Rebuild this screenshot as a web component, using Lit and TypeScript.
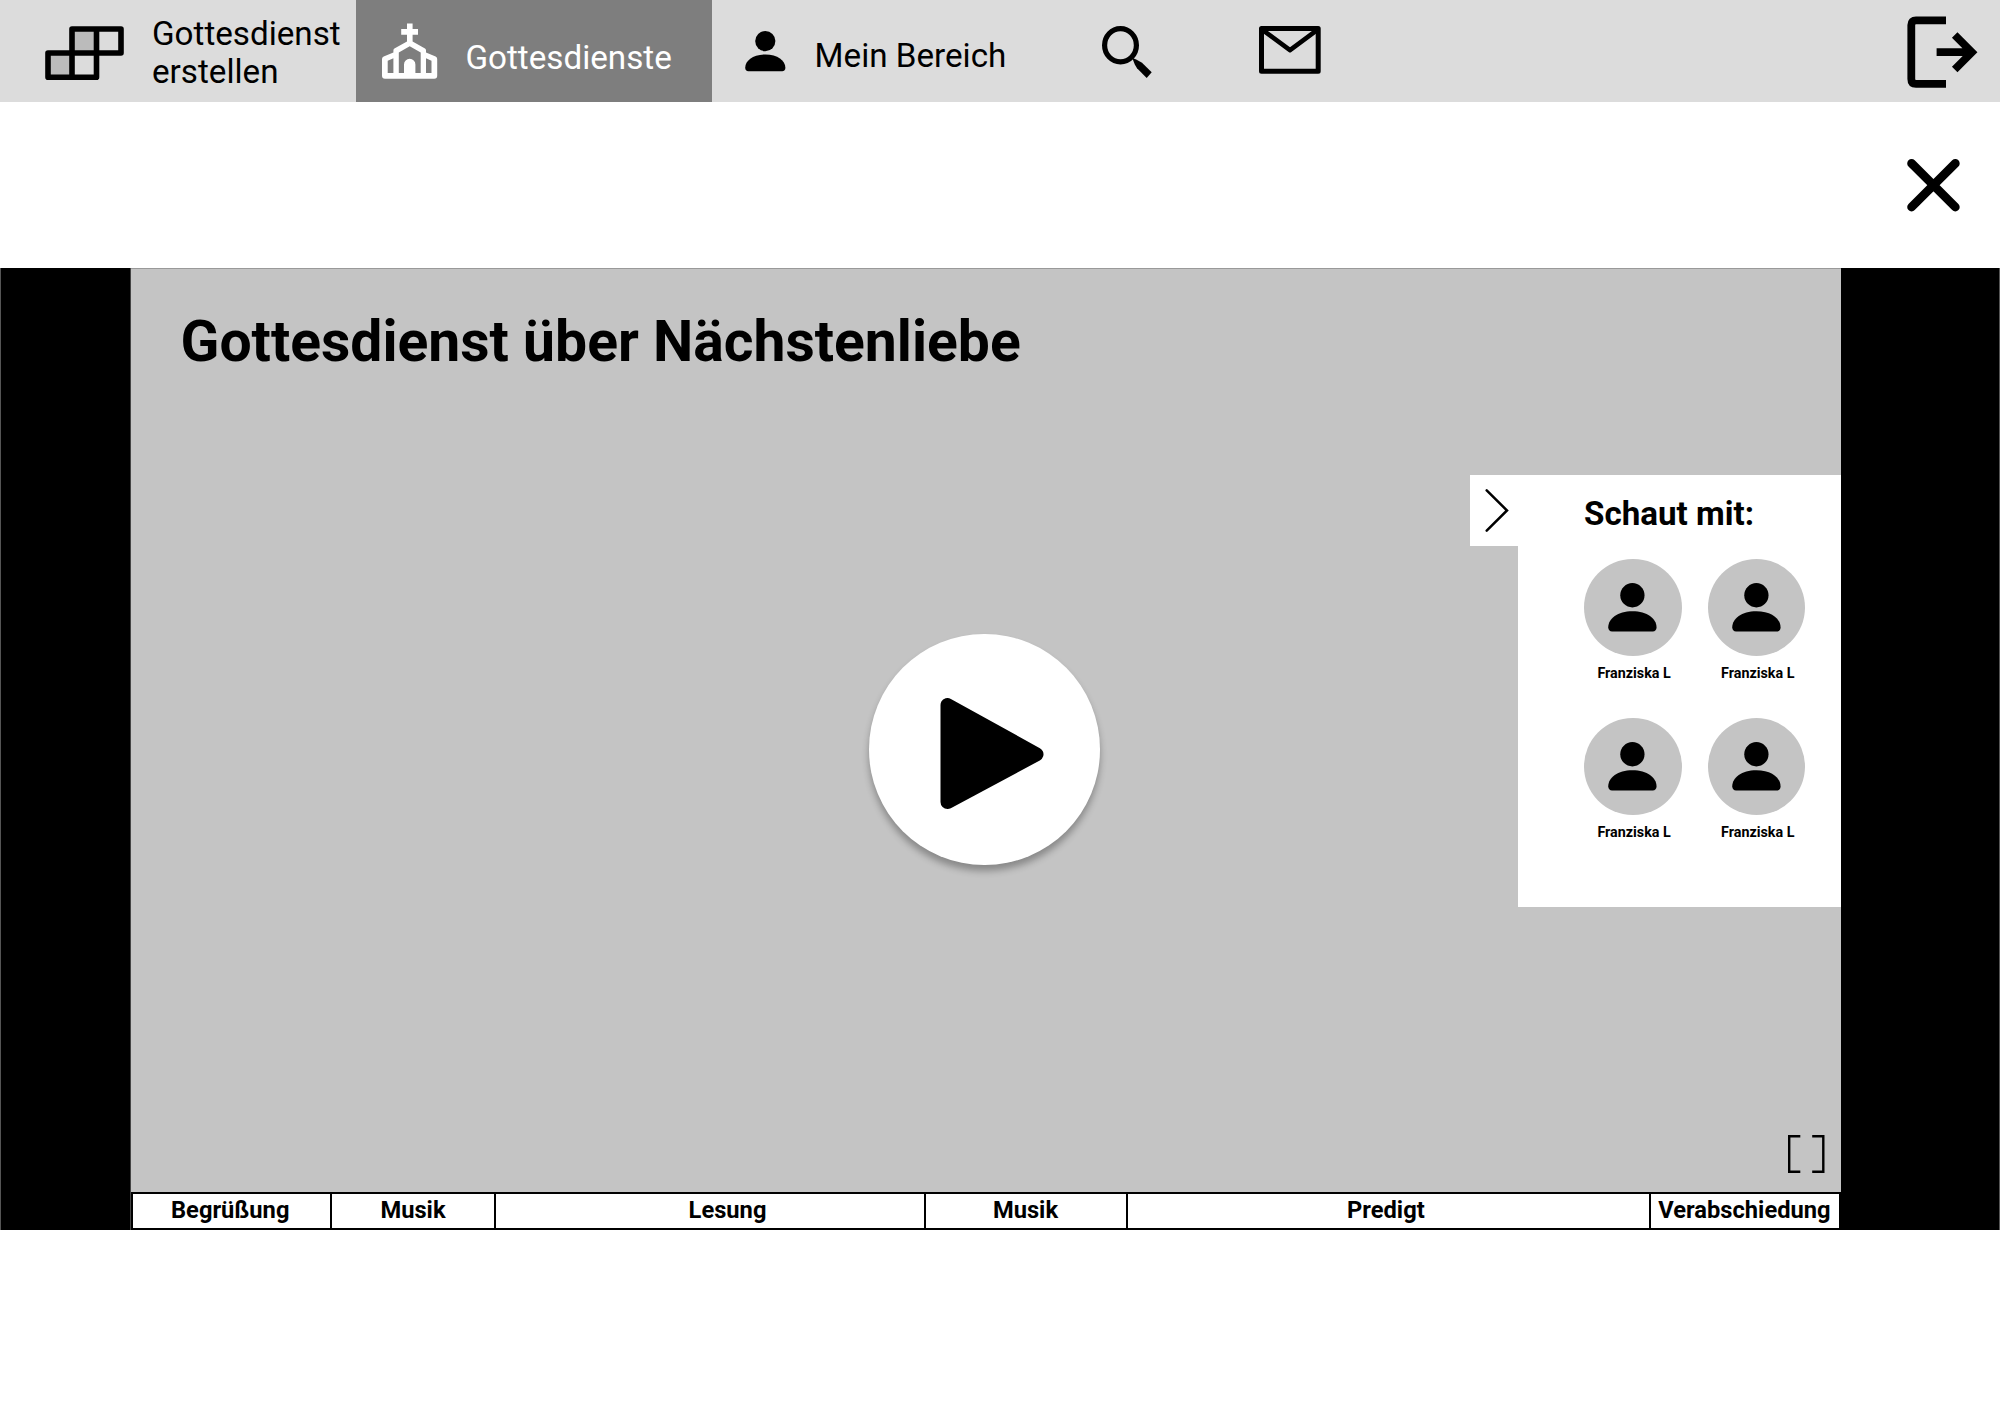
import { LitElement, html, css, svg } from "lit";
import { customElement } from "lit/decorators.js";

const person = svg`<circle cx="20.3" cy="10.1" r="10.1"></circle>
  <path d="M0.2 36.8C0.2 29.5 8 23.4 20.3 23.4S40.4 29.5 40.4 36.8C40.4 39 39.2 40.3 37.2 40.3H3.4C1.4 40.3 0.2 39 0.2 36.8Z"></path>`;

// Widths follow the length of each part; shift moves the label off centre.
const segments = [
  { label: "Begrüßung", width: 199, shift: -1.3 },
  { label: "Musik", width: 164, shift: 0 },
  { label: "Lesung", width: 430, shift: 17.5 },
  { label: "Musik", width: 202, shift: -0.5 },
  { label: "Predigt", width: 522.5, shift: -2.4 },
  { label: "Verabschiedung", width: 188.5, shift: -0.3 },
];
const viewers = ["Franziska L", "Franziska L", "Franziska L", "Franziska L"];

@customElement("app-root")
export class AppRoot extends LitElement {
  static styles = css`
    :host { display: block; height: 1413px; overflow: hidden; background: #fff; color: #000; font-family: Roboto, "Liberation Sans", sans-serif; }
    svg { display: block; flex: none; overflow: visible; }
    .bar { display: flex; height: 102px; background: #dcdcdc; }
    .item { display: flex; box-sizing: border-box; font-size: 33.2px; line-height: 37.5px; white-space: nowrap; }
    .create { width: 356.3px; padding: 15px 0 0 45px; }
    .create svg { margin: 11px 27.5px 0 0; }
    .active { width: 356.2px; background: #7e7e7e; color: #fff; padding: 23px 0 0 25.7px; }
    .active span { margin: 15.5px 0 0 28px; }
    .mine { width: 389.5px; padding: 31px 0 0 33px; }
    .mine span { margin: 5.5px 0 0 28.5px; }
    .search { width: 157px; padding-top: 26px; }
    .mail { padding-top: 26px; }
    .logout { margin-left: auto; padding: 16px 23.3px 0 0; }
    .sub { display: flex; justify-content: flex-end; height: 166px; box-sizing: border-box; padding: 58px 40.5px 0 0; }
    .player { display: flex; box-sizing: border-box; height: 962px; background: #000; padding-left: 129px; border: solid #555; border-width: 0 1px; }
    .stage { position: relative; display: flex; flex-direction: column; width: 1710px; background: #c4c4c4; border-left: 1px solid #444; }
    .view { flex: 1; box-sizing: border-box; border-top: 1px solid #999; padding: 39px 0 0 49.5px; }
    h1 { margin: 0; font-size: 57.05px; line-height: 67px; font-weight: 700; }
    .play { position: absolute; left: 738px; top: 366px; width: 230.5px; height: 230.5px; border-radius: 50%; background: #fff; box-shadow: 0 6px 7px 0 rgba(0,0,0,.3); }
    .drawer { position: absolute; right: 0; top: 207px; display: flex; align-items: flex-start; }
    .toggle { width: 48px; height: 71.2px; background: #fff; }
    .panel { width: 323px; height: 432.3px; box-sizing: border-box; background: #fff; padding: 20px 0 0 66px; }
    h2 { margin: 0 0 25.7px; font-size: 33.15px; line-height: 38px; font-weight: 700; }
    .grid { display: grid; grid-template-columns: 97.5px 97.5px; column-gap: 26.2px; row-gap: 34.5px; }
    .viewer { text-align: center; font-size: 14.3px; line-height: 17px; font-weight: 700; height: 124.5px; }
    .avatar { display: flex; justify-content: center; align-items: center; width: 97.5px; height: 97.5px; border-radius: 50%; background: #c4c4c4; margin-bottom: 9px; }
    .name { padding-left: 2.6px; }
    .full { position: absolute; right: 16.6px; bottom: 57px; }
    .timeline { display: flex; height: 38px; box-sizing: border-box; border: 2px solid #000; background: #fff; }
    .seg { box-sizing: border-box; flex: none; border-right: 2px solid #000; text-align: center; font-size: 23.7px; line-height: 33px; font-weight: 700; white-space: nowrap; }
    .seg:last-child { border-right: 0; }
  `;

  render() {
    return html`
      <nav class="bar">
        <div class="item create">
          <svg width="79.5" height="54" viewBox="0 0 79.5 54"><path d="M27 3H51.5V27H27ZM3 27H27V51.3H3Z" fill="#bbb"></path><path d="M27 3H76V27H3V51.3H51.5V3M27 3V51.3" fill="none" stroke="#000" stroke-width="5.6" stroke-linejoin="round" stroke-linecap="round"></path></svg>
          <span>Gottesdienst<br>erstellen</span>
        </div>
        <div class="item active">
          <svg width="55.5" height="56" viewBox="0 0 55.5 56" fill="#fff"><path fill-rule="evenodd" d="M25 .5H30.6V6H36V11.7H30.6V18.4L43 25.6Q44 26.2 44 27.5V29.4L53.6 33.6Q55.2 34.4 55.2 36V52.8Q55.2 55.7 52.2 55.7H3Q0 55.7 0 52.8V36Q0 34.4 1.7 33.6L11.4 29.4V27.5Q11.4 26.2 12.4 25.6L25 18.4V11.7H19.2V6H25ZM27.7 23.2L16.8 29.5V50H22V41.5A5.7 5.7 0 0 1 33.4 41.5V50H38.7V29.5ZM11.4 35.2L5.7 37.8V50H11.4ZM44 35.2V50H49.5V37.8Z"></path></svg>
          <span>Gottesdienste</span>
        </div>
        <div class="item mine"><svg width="40.6" height="40.4" viewBox="0 0 40.6 40.4">${person}</svg><span>Mein Bereich</span></div>
        <div class="search"><svg width="50" height="53" viewBox="0 0 50 53"><ellipse cx="18.5" cy="19.2" rx="15.9" ry="16.6" fill="none" stroke="#000" stroke-width="5.2"></ellipse><path d="M30.2 31.7L34.7 33.8L40 36.7L49.7 46.3L44.7 52L35 42.3L32.8 38.5Z"></path></svg></div>
        <div class="mail"><svg width="62" height="48" viewBox="0 0 62 48" fill="none" stroke="#000" stroke-linejoin="round"><rect x="2.5" y="2.5" width="56.7" height="42.7" stroke-width="5"></rect><path d="M3.5 3.8L31 24.2L58.3 3.8" stroke-width="4.6"></path></svg></div>
        <div class="logout"><svg width="70" height="72" viewBox="0 0 70 72" fill="none" stroke="#000" stroke-width="7.8"><path d="M39 4.3H9Q4.3 4.3 4.3 9V63Q4.3 67.8 9 67.8H39M29.6 36.2H65M47.7 19L64.9 36.2L47.7 53.4"></path></svg></div>
      </nav>
      <div class="sub"><svg width="52.5" height="52.5" viewBox="0 0 52.5 52.5" stroke="#000" stroke-width="8.8" stroke-linecap="round"><path d="M4.6 3.4L48.3 47M48.3 3.4L4.6 47"></path></svg></div>
      <main class="player">
        <div class="stage">
          <div class="view"><h1>Gottesdienst über Nächstenliebe</h1></div>
          <div class="timeline">${segments.map(s => html`<div class="seg" style="width:${s.width}px;padding-left:${Math.max(0, s.shift * 2)}px;padding-right:${Math.max(0, -s.shift * 2)}px">${s.label}</div>`)}</div>
          <div class="play"><svg width="230.5" height="230.5" viewBox="0 0 230.5 230.5"><path d="M78.5 71V168L167.5 120.3Z" stroke="#000" stroke-width="14" stroke-linejoin="round"></path></svg></div>
          <div class="drawer">
            <div class="toggle"><svg width="47.5" height="71" viewBox="0 0 47.5 71" fill="none" stroke="#000" stroke-width="2.5" stroke-linecap="round"><path d="M16.7 15.4L37 35.5L16.7 55.6"></path></svg></div>
            <div class="panel">
              <h2>Schaut mit:</h2>
              <div class="grid">${viewers.map(n => html`<div class="viewer"><div class="avatar"><svg width="48.8" height="48.8" viewBox="0 0 40.6 40.4">${person}</svg></div><div class="name">${n}</div></div>`)}</div>
            </div>
          </div>
          <svg class="full" width="36.5" height="38" viewBox="0 0 36.5 38" fill="none" stroke="#000" stroke-width="2.4"><path d="M12.3 1.2H1.2V36.8H12.3M24.2 1.2H35.3V36.8H24.2"></path></svg>
        </div>
      </main>`;
  }
}
